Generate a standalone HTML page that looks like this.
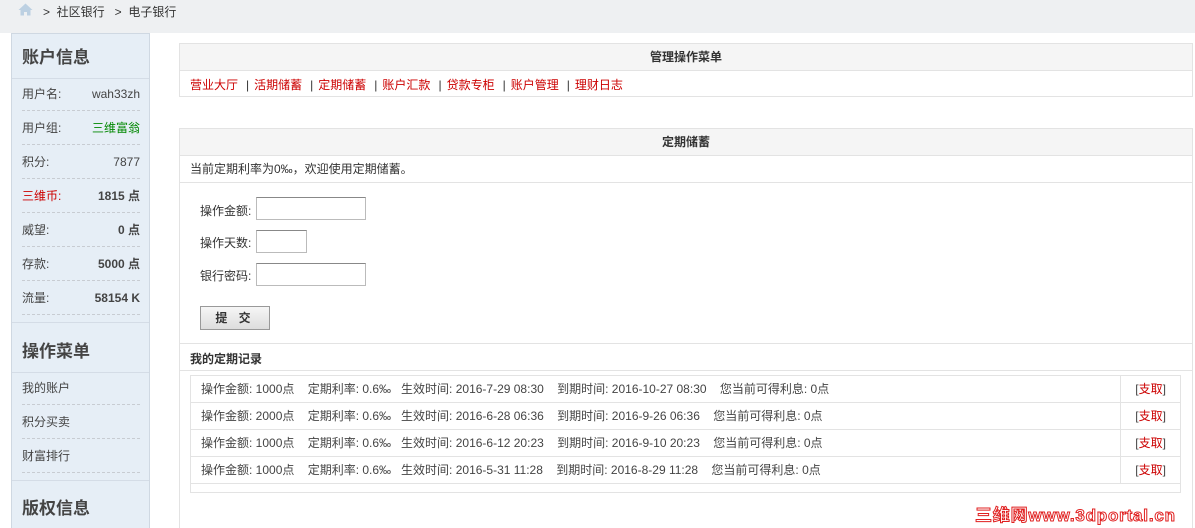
<!DOCTYPE html>
<html style="width:1195px;height:528px;overflow:hidden"><head><meta charset="utf-8"><style>
*{margin:0;padding:0;box-sizing:border-box}
body{width:1195px;height:528px;overflow:hidden;background:#fff;font-family:"Liberation Sans","Noto Sans CJK SC",sans-serif;font-size:12px;color:#333;position:relative}
.a{position:absolute;white-space:nowrap}
.top{position:absolute;left:0;top:0;width:1195px;height:33px;background:#eef0f2}
.side{position:absolute;left:11px;top:33px;width:139px;height:500px;background:#e6eef6;border:1px solid #cfd8e2}
.h{font-size:17px;font-weight:bold;color:#444;left:10px}
.r{left:10px;width:118px;height:34px;line-height:34px;display:flex;justify-content:space-between;color:#444;border-bottom:1px dashed #c8ccd2}
.sep{left:0;width:137px;border-top:1px solid #d4dce6}
.box{position:absolute;left:179px;width:1014px;border:1px solid #e3e3e3}
.hd{height:27px;line-height:27px;background:#f5f5f5;border-bottom:1px solid #e3e3e3;text-align:center;font-weight:bold;color:#333}
.lnk{color:#c00}
.bar{margin:0 5px 0 8px}
input{position:absolute;border:1px solid #bbb;border-top-color:#888;height:23px;background:#fff}
.row{height:27px;line-height:27px;border-bottom:1px solid #e3e3e3;position:relative;padding-left:10px;color:#444}
.row span{position:absolute;left:929px;top:0;height:26px;border-left:1px solid #e3e3e3;width:60px;text-align:right;padding-right:14px}
</style></head><body>
<div class="top"></div>
<svg class="a" style="left:18px;top:3px" width="15" height="13" viewBox="0 0 15 13"><path d="M7.5 0.5L0.5 7H2.5V12.5H6V9H9V12.5H12.5V7H14.5Z" fill="#bcd0e2"/></svg>
<div class="a" style="left:43px;top:3px;color:#333">&gt;&nbsp;&nbsp;社区银行&nbsp;&nbsp;&nbsp;&gt;&nbsp;&nbsp;电子银行</div>

<div class="side">
<div class="a h" style="top:9px">账户信息</div>
<div class="a sep" style="top:44px"></div>
<div class="a r" style="top:43px"><span>用户名:</span><span>wah33zh</span></div>
<div class="a r" style="top:77px"><span>用户组:</span><span style="color:#080">三维富翁</span></div>
<div class="a r" style="top:111px"><span>积分:</span><span>7877</span></div>
<div class="a r" style="top:145px"><span style="color:#c00">三维币:</span><b>1815 点</b></div>
<div class="a r" style="top:179px"><span>威望:</span><b>0 点</b></div>
<div class="a r" style="top:213px"><span>存款:</span><b>5000 点</b></div>
<div class="a r" style="top:247px"><span>流量:</span><b>58154 K</b></div>
<div class="a sep" style="top:288px"></div>
<div class="a h" style="top:303px">操作菜单</div>
<div class="a sep" style="top:338px"></div>
<div class="a r" style="top:337px"><span>我的账户</span></div>
<div class="a r" style="top:371px"><span>积分买卖</span></div>
<div class="a r" style="top:405px"><span>财富排行</span></div>
<div class="a sep" style="top:446px"></div>
<div class="a h" style="top:460px">版权信息</div>
</div>

<div class="box" style="top:43px;height:54px">
<div class="hd">管理操作菜单</div>
<div style="padding:5px 0 0 10px;color:#333;white-space:nowrap"><span class="lnk">营业大厅</span><span class="bar">|</span><span class="lnk">活期储蓄</span><span class="bar">|</span><span class="lnk">定期储蓄</span><span class="bar">|</span><span class="lnk">账户汇款</span><span class="bar">|</span><span class="lnk">贷款专柜</span><span class="bar">|</span><span class="lnk">账户管理</span><span class="bar">|</span><span class="lnk">理财日志</span></div>
</div>

<div class="box" style="top:128px;height:410px">
<div class="hd">定期储蓄</div>
<div style="height:27px;line-height:27px;padding-left:10px;border-bottom:1px solid #e3e3e3">当前定期利率为0‰，欢迎使用定期储蓄。</div>
<div class="a" style="left:20px;top:73px">操作金额:</div>
<div class="a" style="left:20px;top:105px">操作天数:</div>
<div class="a" style="left:20px;top:138px">银行密码:</div>
<input style="left:76px;top:68px;width:110px">
<input style="left:76px;top:101px;width:51px">
<input style="left:76px;top:134px;width:110px">
<div class="a" style="left:20px;top:177px;width:70px;height:24px;border:1px solid #999;background:linear-gradient(#f6f6f6,#ddd);text-align:center;line-height:22px;font-weight:bold;letter-spacing:4px">提 交</div>
<div class="a" style="left:0;top:214px;width:1012px;border-top:1px solid #e3e3e3"></div>
<div class="a" style="left:10px;top:221px;font-weight:bold">我的定期记录</div>
<div class="a" style="left:0;top:241px;width:1012px;border-top:1px solid #e3e3e3"></div>
<div class="a" style="left:10px;top:246px;width:991px;height:118px;border:1px solid #e3e3e3">
<div class="row">操作金额: 1000点&nbsp;&nbsp;&nbsp; 定期利率: 0.6‰&nbsp;&nbsp; 生效时间: 2016-7-29 08:30&nbsp;&nbsp;&nbsp; 到期时间: 2016-10-27 08:30&nbsp;&nbsp;&nbsp; 您当前可得利息: 0点<span>[<b class="lnk" style="font-weight:normal">支取</b>]</span></div>
<div class="row">操作金额: 2000点&nbsp;&nbsp;&nbsp; 定期利率: 0.6‰&nbsp;&nbsp; 生效时间: 2016-6-28 06:36&nbsp;&nbsp;&nbsp; 到期时间: 2016-9-26 06:36&nbsp;&nbsp;&nbsp; 您当前可得利息: 0点<span>[<b class="lnk" style="font-weight:normal">支取</b>]</span></div>
<div class="row">操作金额: 1000点&nbsp;&nbsp;&nbsp; 定期利率: 0.6‰&nbsp;&nbsp; 生效时间: 2016-6-12 20:23&nbsp;&nbsp;&nbsp; 到期时间: 2016-9-10 20:23&nbsp;&nbsp;&nbsp; 您当前可得利息: 0点<span>[<b class="lnk" style="font-weight:normal">支取</b>]</span></div>
<div class="row">操作金额: 1000点&nbsp;&nbsp;&nbsp; 定期利率: 0.6‰&nbsp;&nbsp; 生效时间: 2016-5-31 11:28&nbsp;&nbsp;&nbsp; 到期时间: 2016-8-29 11:28&nbsp;&nbsp;&nbsp; 您当前可得利息: 0点<span>[<b class="lnk" style="font-weight:normal">支取</b>]</span></div>
</div>
</div>
<div class="a" style="left:975px;top:501px;font-size:17px;font-weight:bold;color:#fff;-webkit-text-stroke:1px #e02020;letter-spacing:0.8px">三维网www.3dportal.cn</div>
</body></html>
